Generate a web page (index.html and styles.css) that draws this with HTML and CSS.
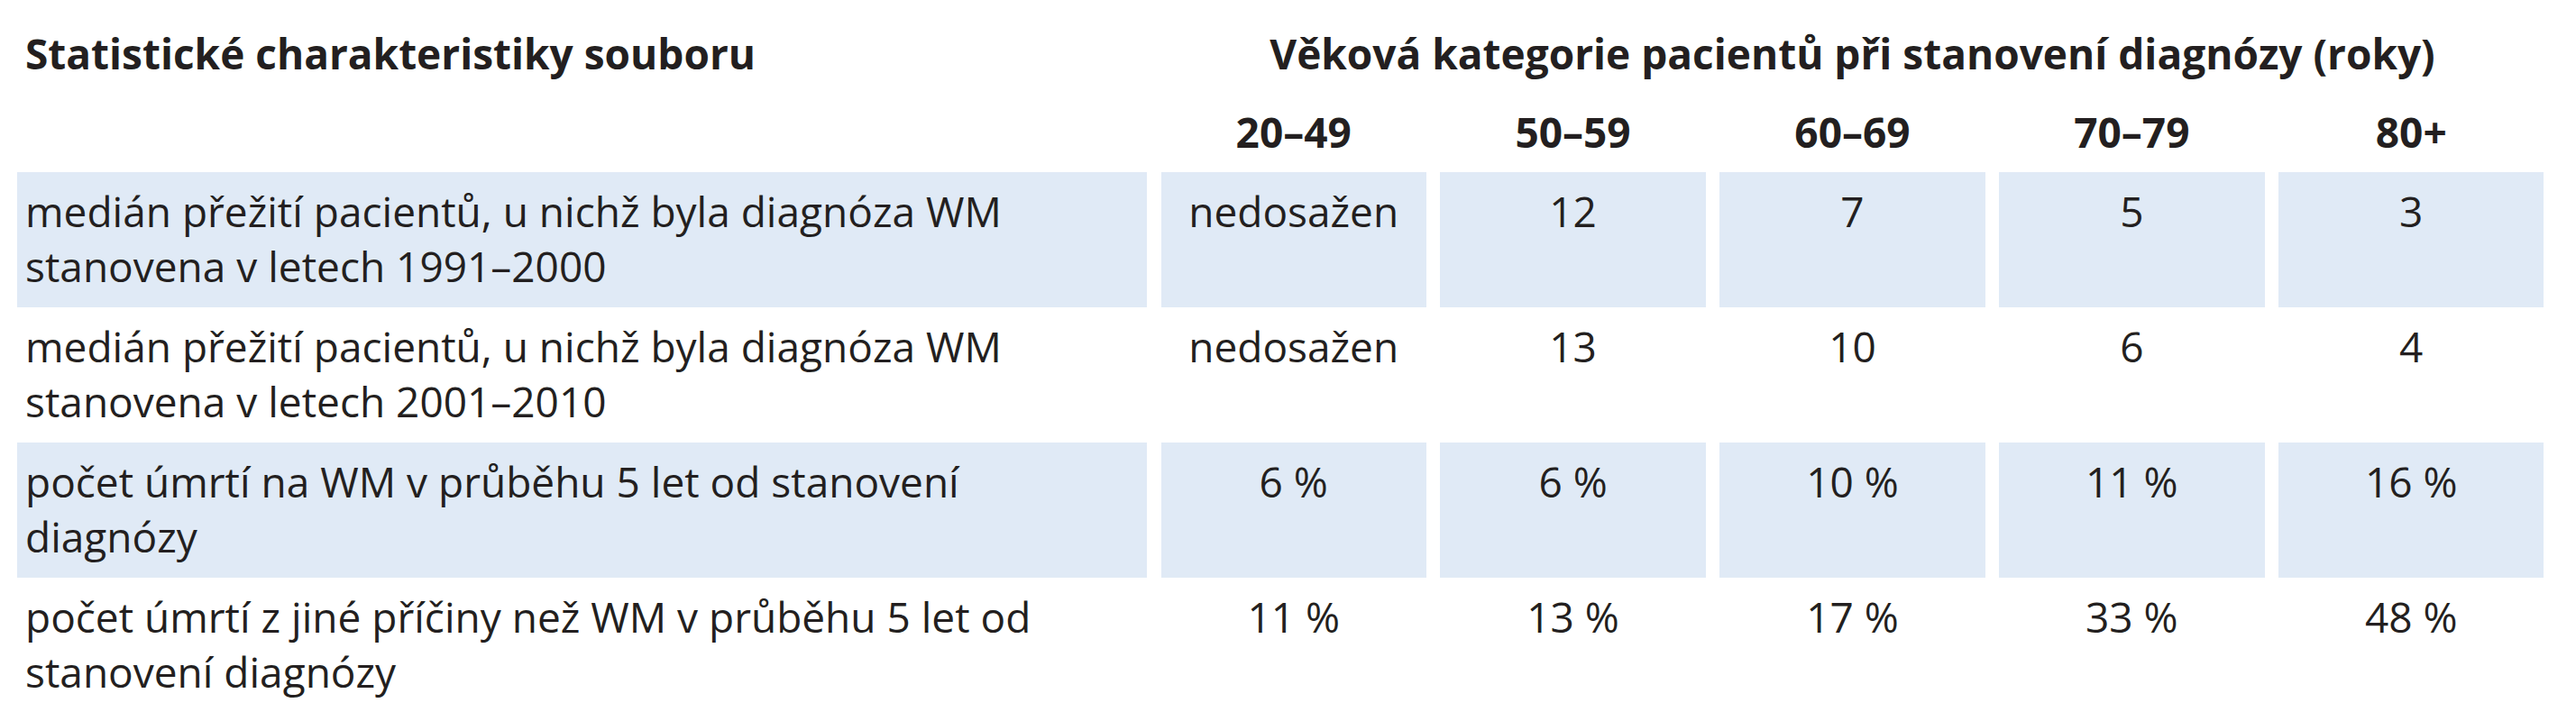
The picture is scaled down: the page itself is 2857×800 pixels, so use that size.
FILE: index.html
```html
<!DOCTYPE html>
<html lang="cs">
<head>
<meta charset="utf-8">
<title>Věková kategorie pacientů</title>
<link rel="stylesheet" href="styles.css">
</head>
<body>
<div class="table">
  <div class="th th-label">Statistické charakteristiky souboru</div>
  <div class="th th-group">Věková kategorie pacientů při stanovení diagnózy (roky)</div>

  <div class="sub"></div>
  <div class="sub age">20–49</div>
  <div class="sub age">50–59</div>
  <div class="sub age">60–69</div>
  <div class="sub age">70–79</div>
  <div class="sub age">80+</div>

  <div class="cell label shade">medián přežití pacientů, u nichž byla diagnóza WM<br>stanovena v letech 1991–2000</div>
  <div class="cell shade">nedosažen</div>
  <div class="cell shade">12</div>
  <div class="cell shade">7</div>
  <div class="cell shade">5</div>
  <div class="cell shade">3</div>

  <div class="cell label">medián přežití pacientů, u nichž byla diagnóza WM<br>stanovena v letech 2001–2010</div>
  <div class="cell">nedosažen</div>
  <div class="cell">13</div>
  <div class="cell">10</div>
  <div class="cell">6</div>
  <div class="cell">4</div>

  <div class="cell label shade">počet úmrtí na WM v průběhu 5 let od stanovení<br>diagnózy</div>
  <div class="cell shade">6 %</div>
  <div class="cell shade">6 %</div>
  <div class="cell shade">10 %</div>
  <div class="cell shade">11 %</div>
  <div class="cell shade">16 %</div>

  <div class="cell label">počet úmrtí z jiné příčiny než WM v průběhu 5 let od<br>stanovení diagnózy</div>
  <div class="cell">11 %</div>
  <div class="cell">13 %</div>
  <div class="cell">17 %</div>
  <div class="cell">33 %</div>
  <div class="cell">48 %</div>
</div>
</body>
</html>
```
FILE: styles.css
```css
html, body {
  margin: 0;
  padding: 0;
  background: #ffffff;
}

body {
  font-family: "Open Sans", "Noto Sans", sans-serif;
  font-size: 46px;
  line-height: 61.5px;
  color: #231f20;
}

.table {
  display: grid;
  grid-template-columns: 1253px repeat(5, 294.4px);
  column-gap: 15.5px;
  margin-left: 19px;
  padding-top: 29px;
}

.th {
  font-weight: 700;
  margin-bottom: 25.5px;
  white-space: nowrap;
}

.th-label {
  padding-left: 9px;
}

.th-group {
  grid-column: 2 / span 5;
  text-align: center;
}

.sub {
  margin-bottom: 13px;
  height: 61.5px;
}

.age {
  font-weight: 700;
  text-align: center;
}

.cell {
  box-sizing: border-box;
  height: 150px;
  padding-top: 13.4px;
  text-align: center;
}

.label {
  text-align: left;
  padding-left: 9px;
}

.shade {
  background: #e0eaf6;
}
```
